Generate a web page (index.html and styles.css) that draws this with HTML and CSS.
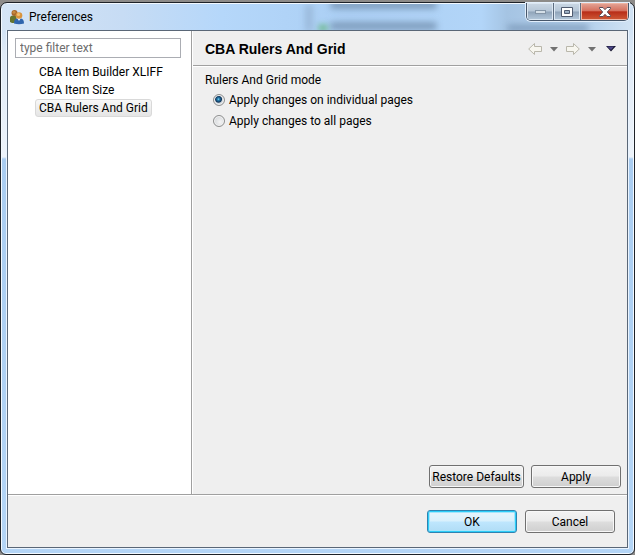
FILE: index.html
```html
<!DOCTYPE html>
<html lang="en">
<head>
<meta charset="utf-8">
<title>Preferences</title>
<link rel="stylesheet" href="styles.css">
</head>
<body>
<div class="window">
  <header class="titlebar">
    <div class="blur" aria-hidden="true"><i class="b1"></i><i class="b2"></i><i class="b3"></i><i class="b4"></i><i class="b5"></i></div>
    <svg class="app-icon" width="16" height="16" viewBox="0 0 16 16" aria-hidden="true">
      <path d="M1 13V9q0-2.500 3-2.500h3L8 12l-3 2H3z" fill="#65752e"/>
      <circle cx="5.500" cy="4" r="3" fill="#a9692b"/><circle cx="5" cy="3.200" r="1.500" fill="#c68b42"/>
      <path d="M5 14.500q0-4.500 3-5l2 1.500 2-1.500q3 .5 3 5-5 1.500-10 0z" fill="#2f65ad"/>
      <path d="M8.500 9.500h3L10 12z" fill="#e7f0fa"/>
      <circle cx="10" cy="6.500" r="3.300" fill="#d9943d"/><circle cx="9.500" cy="5.500" r="1.600" fill="#f2bf70"/>
    </svg>
    <h1 class="title">Preferences</h1>
    <div class="caption">
      <button class="cap" type="button" aria-label="Minimize"><svg width="13" height="7" viewBox="0 0 13 7"><rect x="1.500" y="2.500" width="10" height="3" fill="#d5dfe8" stroke="#8495a7"/></svg></button>
      <button class="cap" type="button" aria-label="Maximize"><svg width="12" height="10" viewBox="0 0 12 10"><path fill-rule="evenodd" d="M.5.5h11v9H.5zM3.500 3.500v3h5v-3z" fill="#fff" stroke="#505b70"/></svg></button>
      <button class="cap close" type="button" aria-label="Close"><svg width="12" height="10" viewBox="0 0 12 10"><path d="M.5.5h3.500L6 2.700 8 .5h3.500v1L8.300 5l3.200 3.500v1H8L6 7.300 4 9.500H.5v-1L3.700 5 .5 1.500z" fill="#fff" stroke="#5b4c58"/></svg></button>
    </div>
  </header>
  <main class="client">
    <div class="panes">
      <nav class="sidebar">
        <input class="filter" type="text" placeholder="type filter text" aria-label="Filter preferences">
        <ul class="tree">
          <li><a href="#xliff">CBA Item Builder XLIFF</a></li>
          <li><a href="#size">CBA Item Size</a></li>
          <li><a class="selected" href="#grid" aria-current="page">CBA Rulers And Grid</a></li>
        </ul>
      </nav>
      <section class="page">
        <div class="page-head">
          <h2>CBA Rulers And Grid</h2>
          <div class="tools">
            <button type="button" aria-label="Back"><svg width="14" height="12" viewBox="0 0 14 12"><path d="M.7 6L6.500.5v3h7v5h-7v3z" fill="#f7f6ef" stroke="#b9b7ab"/></svg></button>
            <button type="button" aria-label="Back history"><svg width="8" height="5" viewBox="0 0 8 5"><path d="M0 0h8L4 4.500z" fill="#717171"/></svg></button>
            <button type="button" aria-label="Forward"><svg width="14" height="12" viewBox="0 0 14 12"><path d="M13.300 6L7.500.5v3h-7v5h7v3z" fill="#f7f6ef" stroke="#b9b7ab"/></svg></button>
            <button type="button" aria-label="Forward history"><svg width="8" height="5" viewBox="0 0 8 5"><path d="M0 0h8L4 4.500z" fill="#717171"/></svg></button>
            <button type="button" aria-label="Menu"><svg width="10" height="6" viewBox="0 0 10 6"><path d="M0 0h10L5 5.500z" fill="#15142e"/><path d="M1 .5h7L5 4z" fill="#4c4687"/></svg></button>
          </div>
        </div>
        <fieldset class="mode">
          <legend>Rulers And Grid mode</legend>
          <label><input type="radio" name="mode" checked>Apply changes on individual pages</label>
          <label><input type="radio" name="mode">Apply changes to all pages</label>
        </fieldset>
        <div class="page-actions">
          <button class="btn wide" type="button">Restore Defaults</button>
          <button class="btn" type="button">Apply</button>
        </div>
      </section>
    </div>
    <footer class="dialog-actions">
      <button class="btn primary" type="button">OK</button>
      <button class="btn" type="button">Cancel</button>
    </footer>
  </main>
</div>
</body>
</html>
```
FILE: styles.css
```css
* { box-sizing: border-box; }
body {
  margin: 0;
  padding-top: 2px;
  height: 100vh;
  display: flex;
  background: #8d8b89;
  color: #000;
  font: 12px/18px Roboto, "Open Sans", sans-serif;
}
button, input { font: inherit; color: inherit; }
.window {
  flex: 1;
  display: flex;
  flex-direction: column;
  padding: 0 6px 6px;
  border: 1px solid #1e2228;
  border-radius: 7px 7px 6px 6px;
  box-shadow: inset 0 0 0 1px #f3f9ff;
  background: linear-gradient(#c3dbf3 0, #dfeaf6 50px, #edf3fa 154px, #aacdf1 156px, #b4d5f6 100%);
}
.titlebar {
  position: relative;
  height: 27px;
  display: flex;
  align-items: center;
  gap: 4px;
  padding-left: 2px;
}
.blur {
  position: absolute;
  inset: 1px -5px 0;
  overflow: hidden;
  border-radius: 5px 5px 0 0;
  background: linear-gradient(90deg, #d5e5f6 0, #c7dcf4 120px, #b5d7fa 220px, #abcff4 55%, #b2d5f8 76%, #a5c4e3 80%, #b9d3ed 94%, #d2e3f4);
}
.blur i { position: absolute; border-radius: 5px; filter: blur(3px); background: #7f9dbd; }
.blur .b1 { left: 52%; top: -3px; width: 17%; height: 8px; }
.blur .b2 { left: 52%; top: 18px; width: 17%; height: 8px; }
.blur .b3 { left: 50%; top: 21px; width: 10px; height: 6px; background: #62b57c; }
.blur .b4 { left: 48%; top: 0; width: 8px; height: 28px; background: #9bbadb; }
.blur .b5 { left: 80%; top: 21px; width: 13%; height: 6px; }
.app-icon { position: relative; }
.title { position: relative; margin: 0; font-size: 12px; font-weight: 400; }
.caption {
  position: relative;
  align-self: flex-start;
  display: flex;
  margin: 0 -1px 0 auto;
  border: 1px solid #47566a;
  border-top: 0;
  border-radius: 0 0 5px 5px;
  box-shadow: 0 0 0 1px #e2eefb;
  overflow: hidden;
}
.cap {
  width: 27px;
  height: 17px;
  display: grid;
  place-items: center;
  padding: 0;
  border: 0;
  border-right: 1px solid #5d6c80;
  background: linear-gradient(#cbd8e5 0, #b6c6d7 48%, #8fa3b9 52%, #b5c9dc 100%);
  box-shadow: inset 0 0 0 1px #dce7f2;
}
.close {
  width: 47px;
  border-right: 0;
  background: linear-gradient(#e4a699 0, #d5705e 46%, #b82d18 52%, #cf5a37 100%);
  box-shadow: inset 0 0 0 1px #eeb5a4;
}
.client {
  flex: 1;
  display: flex;
  flex-direction: column;
  border: 1px solid #5a6777;
  outline: 1px solid #eaf4ff;
  background: #efefef;
}
.panes { flex: 1; display: flex; }
.sidebar {
  width: 184px;
  flex: none;
  padding: 7px 10px 7px 7px;
  background: #fff;
  border-right: 1px solid #a0a0a0;
}
.filter {
  display: block;
  width: 100%;
  height: 20px;
  padding: 0 4px;
  border: 1px solid #abadb3;
  background: #fff;
}
.filter::placeholder { color: #6d6d6d; opacity: 1; }
.tree { list-style: none; margin: 5px 0 0 20px; padding: 0; }
.tree li { display: flex; height: 18px; }
.tree a {
  padding: 0 3px;
  border: 1px solid transparent;
  border-radius: 3px;
  line-height: 16px;
  color: #000;
  text-decoration: none;
  white-space: nowrap;
}
.tree .selected {
  border-color: #d9d9d9;
  background: linear-gradient(#f8f8f8, #e5e5e5);
}
.page { flex: 1; display: flex; flex-direction: column; border-left: 1px solid #fff; }
.page-head {
  height: 35px;
  display: flex;
  align-items: center;
  justify-content: space-between;
  padding: 2px 11px 0 12px;
  border-bottom: 1px solid #a0a0a0;
  box-shadow: 0 1px #fff;
}
.page-head h2 {
  margin: 0;
  font: 700 14px/18px "Liberation Sans", sans-serif;
}
.tools { display: flex; align-items: center; gap: 8px; }
.tools button { display: flex; padding: 0; border: 0; background: none; }
.tools button:last-child { margin-left: 2px; }
.mode { margin: 0; padding: 5px 12px; border: 0; display: flex; flex-direction: column; }
.mode legend { float: left; padding: 0; line-height: 18px; }
.mode label { display: flex; align-items: center; gap: 4px; height: 21px; padding-left: 8px; }
.mode input {
  appearance: none;
  width: 12px;
  height: 12px;
  margin: 0;
  border: 1px solid #8e8f8f;
  border-radius: 50%;
  background: radial-gradient(circle at 60% 60%, #f4f4f4, #c9cdd1);
  box-shadow: inset 0 0 0 1px #f4f4f4;
}
.mode input:checked {
  background: radial-gradient(circle at 45% 42%, #8fdcf7 0, #2b87b8 1px, #10355b 3px, #d5dade 4px);
}
.page-actions {
  margin-top: auto;
  display: flex;
  justify-content: flex-end;
  gap: 7px;
  padding: 0 6px 6px;
}
.dialog-actions {
  display: flex;
  justify-content: flex-end;
  gap: 8px;
  padding: 15px 12px 14px;
  border-top: 1px solid #a0a0a0;
  box-shadow: inset 0 1px #fff;
}
.btn {
  width: 90px;
  height: 23px;
  padding: 0;
  border: 1px solid #707070;
  border-radius: 3px;
  background: linear-gradient(#f3f3f3 0, #ebebeb 48%, #dddddd 52%, #cfcfcf 100%);
  box-shadow: inset 0 0 0 1px #f8f8f8;
  line-height: 20px;
  white-space: nowrap;
}
.btn.wide { width: 95px; }
.btn.primary {
  border-color: #2f83b0;
  background: linear-gradient(#e8f5fc 0, #d9f0fc 48%, #bee6fd 52%, #b0dcf5 100%);
  box-shadow: inset 0 0 0 1px #2ccdf8, inset 0 0 0 2px #a5e5fb;
}
```
